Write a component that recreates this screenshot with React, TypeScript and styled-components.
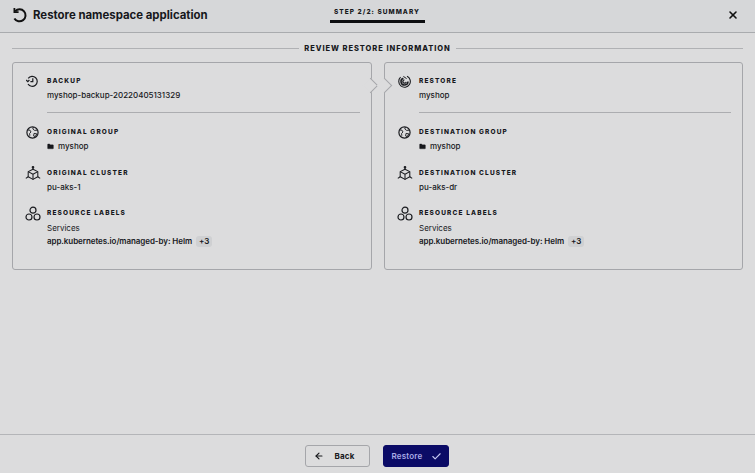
import React from 'react'
import styled, { createGlobalStyle } from 'styled-components'
import { ArrowLeft, Check, Folder, X } from 'lucide-react'

const GlobalStyle = createGlobalStyle`
  html, body {
    margin: 0;
    padding: 0;
    height: 100%;
    background: #dcdcdd;
    font-family: Inter, "Liberation Sans", sans-serif;
    color: #17181c;
  }
  #root {
    height: 100%;
  }
`

const RestoreArrow = () => (
  <svg width="17" height="17" viewBox="0 0 17 17" fill="none" stroke="#111" strokeWidth="2">
    <path d="M4.2 4.2 A6 6 0 1 1 3.4 11.4" />
    <path d="M3.4 1 V5.2 H7.6" strokeWidth="1.8" />
  </svg>
)

const BackupIcon = () => (
  <svg width="13" height="13" viewBox="0 0 13 13" fill="none" stroke="#1b1c20" strokeWidth="1.2">
    <path d="M2.2 3.4 A5 5 0 1 1 2 9" />
    <path d="M0.2 5 L1.8 6.6 L3.4 5" />
    <path d="M6.8 3.2 V6.6 H4.4" />
  </svg>
)

const RestoreSpinIcon = () => (
  <svg width="13" height="13" viewBox="0 0 13 13" fill="none" stroke="#1b1c20">
    <path d="M9 1.2 A5.8 5.8 0 1 1 2.6 2.2" strokeWidth="1.1" />
    <path d="M10 6.5 A3.5 3.5 0 1 1 5.4 3.2" strokeWidth="1.5" />
    <path d="M8.2 6.8 A1.7 1.7 0 1 1 6.4 4.8" strokeWidth="1.3" />
    <path d="M5.4 1.4 L8.6 3.6" strokeWidth="1" />
  </svg>
)

const GlobeIcon = () => (
  <svg width="13" height="13" viewBox="0 0 13 13" fill="none" stroke="#1b1c20" strokeWidth="0.9">
    <circle cx="6.5" cy="6.5" r="5.6" strokeWidth="1.2" />
    <path d="M1.6 4 L4 4.2 L5 6 L3.6 7.4 L3.8 9.8" />
    <path d="M7.4 1 L6.8 3 L8.6 4.4 L11.4 4.2" />
    <path d="M8 7.4 L10.8 7.8 L9.2 10.6 L7.6 10 Z" />
  </svg>
)

const ClusterIcon = () => (
  <svg width="16" height="16" viewBox="0 0 16 16" fill="none" stroke="#1b1c20" strokeWidth="1.05" strokeLinejoin="round">
    <path d="M8 3.2 L12.8 5.6 V10.8 L8 13.4 L3.2 10.8 V5.6 Z" />
    <path d="M3.2 5.6 L8 8.2 L12.8 5.6 M8 8.2 V13.4" />
    <path d="M8 3.2 V1.2 M3.2 10.8 L0.8 12.4 M12.8 10.8 L15.2 12.4" />
    <circle cx="8" cy="1.3" r="0.8" fill="#1b1c20" />
  </svg>
)

const LabelsIcon = () => (
  <svg width="16" height="16" viewBox="0 0 16 16" fill="none" stroke="#1b1c20" strokeWidth="1.2">
    <circle cx="8" cy="4.2" r="3" />
    <circle cx="4" cy="11" r="3" />
    <circle cx="12" cy="11" r="3" />
  </svg>
)

const Page = styled.div`
  height: 473px;
  width: 755px;
  display: flex;
  flex-direction: column;
  overflow: hidden;
`

const TopBar = styled.header`
  height: 33px;
  box-sizing: border-box;
  flex: none;
  display: grid;
  grid-template-columns: 1fr auto 1fr;
  align-items: center;
  padding: 0 16px 0 11px;
  background: #d6d7d9;
  border-bottom: 1px solid #a9abae;
`

const TitleGroup = styled.div`
  display: flex;
  align-items: center;
  gap: 5px;
  margin-top: -2px;
`

const Title = styled.h1`
  margin: 0;
  font-size: 11.4px;
  font-weight: 700;
  white-space: nowrap;
`

const StepTab = styled.div`
  height: 23px;
  align-self: start;
  position: relative;
  left: 2px;
  padding-top: 8px;
  box-sizing: border-box;
  width: 95px;
  text-align: center;
  font-size: 6.5px;
  font-weight: 800;
  letter-spacing: 1.05px;
  white-space: nowrap;
  border-bottom: 3px solid #0c0d10;
`

const CloseButton = styled.div`
  justify-self: end;
  display: flex;
  margin-top: -2px;
`

const Body = styled.main`
  flex: 1;
  padding: 7px 12px 0;
`

const SectionTitle = styled.div`
  display: flex;
  align-items: center;
  gap: 5px;
  height: 16px;
  font-size: 7.5px;
  font-weight: 800;
  letter-spacing: 0.95px;
  white-space: nowrap;

  &::before,
  &::after {
    content: '';
    flex: 1;
    height: 1px;
    background: #b0b1b4;
  }
`

const Cards = styled.div`
  display: grid;
  grid-template-columns: 360px 359px;
  justify-content: space-between;
  margin-top: 6px;
`

const Card = styled.section`
  position: relative;
  height: 208px;
  box-sizing: border-box;
  padding: 14px 11px 0 13px;
  border: 1px solid #a5a6aa;
  border-radius: 3px;
  background: #dcdcdd;
`

const Pointer = styled.span<{ $side: 'out' | 'in' }>`
  position: absolute;
  top: 17px;
  left: ${p => (p.$side === 'out' ? '352px' : '-6px')};
  width: 11px;
  height: 11px;
  box-sizing: border-box;
  transform: rotate(45deg);
  background: #dcdcdd;
  border-top: 1px solid #a5a6aa;
  border-right: 1px solid #a5a6aa;
`

const Row = styled.div<{ $height: number }>`
  display: grid;
  grid-template-columns: 21px 1fr;
  height: ${p => p.$height}px;
`

const IconCell = styled.div`
  display: flex;
  align-items: center;
  justify-content: center;
  width: 13px;
  height: 9px;

  svg {
    flex: none;
  }
`

const Label = styled.div`
  font-size: 6.5px;
  line-height: 9px;
  font-weight: 800;
  letter-spacing: 1.15px;
  white-space: nowrap;
`

const Value = styled.div`
  display: flex;
  align-items: center;
  gap: 4px;
  margin-top: 4px;
  font-size: 8px;
  line-height: 10px;
  font-weight: 500;
  white-space: nowrap;
`

const Description = styled(Value)`
  margin-top: 5px;
  font-weight: 400;
  line-height: 11px;
`

const LabelValue = styled(Value)`
  margin-top: 2px;
  font-weight: 600;
  line-height: 11px;
  letter-spacing: -0.07px;
`

const Badge = styled.span`
  padding: 0 3px;
  font-size: 8px;
  border-radius: 3px;
  background: #cfd0d2;
`

const Divider = styled.hr`
  margin: 0 0 15px 21px;
  border: 0;
  height: 1px;
  background: #acadb0;
`

const Footer = styled.footer`
  height: 39px;
  box-sizing: border-box;
  flex: none;
  display: flex;
  justify-content: center;
  gap: 13px;
  padding: 10px 2px 0 0;
  border-top: 1px solid #b4b5b8;
`

const Button = styled.button<{ $primary?: boolean }>`
  width: ${p => (p.$primary ? 66 : 65)}px;
  height: 22px;
  padding: 0 0 0 8px;
  display: flex;
  align-items: center;
  box-sizing: border-box;
  font-family: inherit;
  font-size: 8px;
  letter-spacing: 0.2px;
  font-weight: ${p => (p.$primary ? 600 : 700)};
  color: ${p => (p.$primary ? '#a9ace6' : '#17181c')};
  background: ${p => (p.$primary ? '#0b0b66' : 'transparent')};
  border: 1px solid ${p => (p.$primary ? '#0b0b66' : '#a5a6aa')};
  border-radius: 3px;
`

const ButtonText = styled.span<{ $gap: number }>`
  margin: 0 ${p => p.$gap}px;
`

const CheckMark = styled(Check)`
  margin-left: 8px;
  color: #c4c7f2;
`

type Item = {
  icon: React.ReactNode
  label: string
  value: string
  folder?: boolean
}

const InfoRow = ({ icon, label, value, folder, height }: Item & { height: number }) => (
  <Row $height={height}>
    <IconCell>{icon}</IconCell>
    <div>
      <Label>{label}</Label>
      <Value>
        {folder && <Folder size={7} fill="#17181c" strokeWidth={1} />}
        {value}
      </Value>
    </div>
  </Row>
)

const InfoCard = ({ side, first, group, cluster }: { side: 'out' | 'in'; first: Item; group: Item; cluster: Item }) => (
  <Card>
    <Pointer $side={side} />
    <InfoRow {...first} height={35} />
    <Divider />
    <InfoRow {...group} height={41} />
    <InfoRow {...cluster} height={40} />
    <Row $height={50}>
      <IconCell>
        <LabelsIcon />
      </IconCell>
      <div>
        <Label>RESOURCE LABELS</Label>
        <Description>Services</Description>
        <LabelValue>
          app.kubernetes.io/managed-by: Helm
          <Badge>+3</Badge>
        </LabelValue>
      </div>
    </Row>
  </Card>
)

export default function App() {
  return (
    <Page>
      <GlobalStyle />
      <TopBar>
        <TitleGroup>
          <RestoreArrow />
          <Title>Restore namespace application</Title>
        </TitleGroup>
        <StepTab>STEP 2/2: SUMMARY</StepTab>
        <CloseButton>
          <X size={12} strokeWidth={3.2} color="#111" />
        </CloseButton>
      </TopBar>
      <Body>
        <SectionTitle>REVIEW RESTORE INFORMATION</SectionTitle>
        <Cards>
          <InfoCard
            side="out"
            first={{ icon: <BackupIcon />, label: 'BACKUP', value: 'myshop-backup-20220405131329' }}
            group={{ icon: <GlobeIcon />, label: 'ORIGINAL GROUP', value: 'myshop', folder: true }}
            cluster={{ icon: <ClusterIcon />, label: 'ORIGINAL CLUSTER', value: 'pu-aks-1' }}
          />
          <InfoCard
            side="in"
            first={{ icon: <RestoreSpinIcon />, label: 'RESTORE', value: 'myshop' }}
            group={{ icon: <GlobeIcon />, label: 'DESTINATION GROUP', value: 'myshop', folder: true }}
            cluster={{ icon: <ClusterIcon />, label: 'DESTINATION CLUSTER', value: 'pu-aks-dr' }}
          />
        </Cards>
      </Body>
      <Footer>
        <Button>
          <ArrowLeft size={10} strokeWidth={2.8} />
          <ButtonText $gap={11}>Back</ButtonText>
        </Button>
        <Button $primary>
          <ButtonText $gap={0}>Restore</ButtonText>
          <CheckMark size={11} strokeWidth={2.4} />
        </Button>
      </Footer>
    </Page>
  )
}
